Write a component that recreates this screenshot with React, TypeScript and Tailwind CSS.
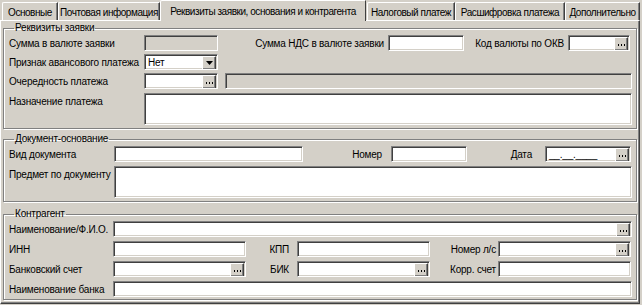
import type { ReactNode } from "react";

// Classic Win9x style form: "Реквизиты заявки, основания и контрагента" tab

const sunken =
  "border-t border-l border-t-[#808080] border-l-[#808080] border-b border-r border-b-white border-r-white shadow-[inset_1px_1px_0_#404040,inset_-1px_-1px_0_#d4d0c8]";

const raised =
  "bg-[#d4d0c8] border-t border-l border-t-white border-l-white border-b border-r border-b-[#404040] border-r-[#404040] shadow-[inset_-1px_-1px_0_#808080]";

function DotsButton() {
  return (
    <div className={`w-[14px] h-[14px] shrink-0 ${raised} flex items-end justify-center pb-[4px]`}>
      <svg width="7" height="2" viewBox="0 0 7 2">
        <rect x="0" y="0" width="1" height="2" fill="#000" />
        <rect x="3" y="0" width="1" height="2" fill="#000" />
        <rect x="6" y="0" width="1" height="2" fill="#000" />
      </svg>
    </div>
  );
}

function ArrowButton() {
  return (
    <div className={`w-[14px] h-[14px] shrink-0 ${raised} flex items-center justify-center`}>
      <svg width="7" height="4" viewBox="0 0 7 4">
        <path d="M0 0h7L3.5 4z" fill="#000" />
      </svg>
    </div>
  );
}

interface FieldProps {
  w?: string;
  dots?: boolean;
  arrow?: boolean;
  disabled?: boolean;
  value?: string;
  h?: string;
}

function Field({ w = "flex-1", dots, arrow, disabled, value, h = "h-[16px]" }: FieldProps) {
  return (
    <div
      className={`${w} ${h} shrink-0 ${sunken} ${disabled ? "bg-[#d4d0c8]" : "bg-white"} flex items-start justify-between pl-[3px] pt-[1px] pr-[1px] overflow-hidden`}
    >
      <span className="leading-[13px] whitespace-nowrap">{value}</span>
      {dots && <DotsButton />}
      {arrow && <ArrowButton />}
    </div>
  );
}

function Label({ w, children, right, pr }: { w: string; children: ReactNode; right?: boolean; pr?: string }) {
  return (
    <div className={`${w} shrink-0 whitespace-nowrap ${right ? "text-right" : ""} ${pr ?? ""}`}>{children}</div>
  );
}

function Group({ title, children, className }: { title: string; children: ReactNode; className?: string }) {
  return (
    <fieldset
      className={`border border-[#808080] shadow-[1px_1px_0_#fff,inset_1px_1px_0_#fff] mx-[2px] pl-[5px] pr-[4px] ${className ?? ""}`}
    >
      <legend className="ml-[5px] px-[1px] leading-[12px]">{title}</legend>
      {children}
    </fieldset>
  );
}

const tabs: [string, string][] = [
  ["Основные", "w-[56px]"],
  ["Почтовая информация", "w-[102px]"],
  ["Реквизиты заявки, основания и контрагента", "w-[206px]"],
  ["Налоговый платеж", "w-[88px]"],
  ["Расшифровка платежа", "w-[110px]"],
  ["Дополнительно", "w-[75px]"],
];

export default function App() {
  return (
    <div
      className="w-[642px] h-[305px] bg-[#d4d0c8] text-black text-[10px] tracking-[-0.2px] overflow-hidden"
      style={{ fontFamily: '"Liberation Sans", Arial, sans-serif' }}
    >
      {/* Tabs */}
      <div className="flex items-end h-[20px] pl-[2px] relative z-10 tracking-[-0.45px]">
        {tabs.map(([t, w], i) =>
          i === 2 ? (
            <div
              key={t}
              className={`${w} shrink-0 h-[21px] -mb-[1px] text-center pt-[3px] bg-[#d4d0c8] border-t border-l border-t-white border-l-white border-r border-r-[#404040] rounded-tl-[2px] whitespace-nowrap`}
            >
              {t}
            </div>
          ) : (
            <div
              key={t}
              className={`${w} shrink-0 h-[18px] text-center pt-[2px] border-t border-l border-t-white border-l-white border-r border-r-[#404040] shadow-[inset_-1px_0_0_#808080] rounded-tl-[2px] whitespace-nowrap ${i === 3 ? "ml-[1px]" : ""}`}
            >
              {t}
            </div>
          )
        )}
      </div>

      {/* Page */}
      <div className="h-[284px] border-t border-l border-t-white border-l-white border-r border-b border-r-[#404040] border-b-[#404040] shadow-[inset_-1px_-1px_0_#808080] mr-[2px] pt-[1px]">
        <Group title="Реквизиты заявки" className="pb-[3px]">
          <div className="flex items-center h-[16px] mt-[1px]">
            <Label w="w-[135px]">Сумма в валюте заявки</Label>
            <Field w="w-[74px]" disabled />
            <Label w="w-[170px]" right pr="pr-[4px]">
              Сумма НДС в валюте заявки
            </Label>
            <Field w="w-[76px]" />
            <Label w="w-[104px]" right pr="pr-[4px]">
              Код валюты по ОКВ
            </Label>
            <Field w="w-[62px]" dots />
          </div>
          <div className="flex items-center h-[16px] mt-[3px]">
            <Label w="w-[135px]">Признак авансового платежа</Label>
            <Field w="w-[74px]" arrow value="Нет" />
          </div>
          <div className="flex items-center h-[16px] mt-[3px]">
            <Label w="w-[135px]">Очередность платежа</Label>
            <Field w="w-[74px]" dots />
            <div className="w-[7px] shrink-0" />
            <Field disabled />
          </div>
          <div className="flex items-start mt-[4px]">
            <Label w="w-[135px] pt-[1px]">Назначение платежа</Label>
            <Field h="h-[32px]" />
          </div>
        </Group>

        <Group title="Документ-основание" className="mt-[4px] pb-[3px]">
          <div className="flex items-center h-[16px] mt-[1px]">
            <Label w="w-[105px]">Вид документа</Label>
            <Field w="w-[189px]" />
            <Label w="w-[88px]" right pr="pr-[9px]">
              Номер
            </Label>
            <Field w="w-[76px]" />
            <Label w="w-[78px]" right pr="pr-[13px]">
              Дата
            </Label>
            <Field w="w-[86px]" dots value="__.__.____" />
          </div>
          <div className="flex items-start mt-[4px]">
            <Label w="w-[105px] pt-[1px]">Предмет по документу</Label>
            <Field h="h-[32px]" />
          </div>
        </Group>

        <Group title="Контрагент" className="mt-[6px] pb-[2px]">
          <div className="flex items-center h-[16px] mt-[1px]">
            <Label w="w-[104px]">Наименование/Ф.И.О.</Label>
            <Field dots />
          </div>
          <div className="flex items-center h-[16px] mt-[4px]">
            <Label w="w-[104px]">ИНН</Label>
            <Field w="w-[133px]" />
            <Label w="w-[51px]" right pr="pr-[8px]">
              КПП
            </Label>
            <Field w="w-[133px]" />
            <Label w="w-[68px]" right pr="pr-[2px]">
              Номер л/с
            </Label>
            <Field w="w-[133px]" dots />
          </div>
          <div className="flex items-center h-[16px] mt-[4px]">
            <Label w="w-[104px]">Банковский счет</Label>
            <Field w="w-[133px]" dots />
            <Label w="w-[51px]" right pr="pr-[8px]">
              БИК
            </Label>
            <Field w="w-[133px]" dots />
            <Label w="w-[68px]" right pr="pr-[2px]">
              Корр. счет
            </Label>
            <Field w="w-[133px]" />
          </div>
          <div className="flex items-center h-[16px] mt-[4px]">
            <Label w="w-[104px]">Наименование банка</Label>
            <Field />
          </div>
        </Group>
      </div>
    </div>
  );
}
